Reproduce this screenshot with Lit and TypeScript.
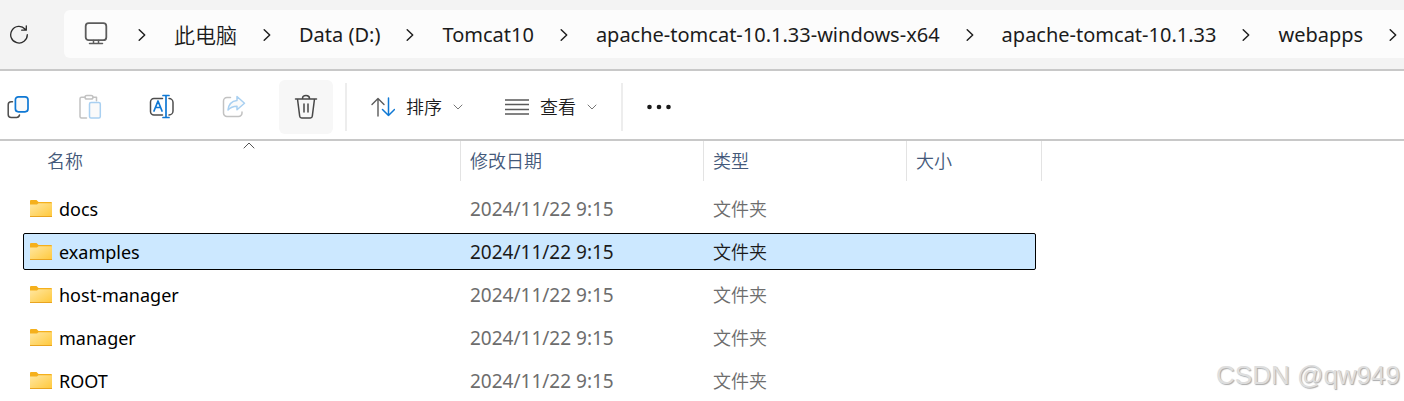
import { LitElement, html, css, svg } from "lit";
import { customElement, state } from "lit/decorators.js";

interface Entry {
  name: string;
  modified: string;
  type: string;
}

const crumbs = [
  "此电脑",
  "Data (D:)",
  "Tomcat10",
  "apache-tomcat-10.1.33-windows-x64",
  "apache-tomcat-10.1.33",
  "webapps",
];

const entries: Entry[] = ["docs", "examples", "host-manager", "manager", "ROOT"].map((name) => ({
  name,
  modified: "2024/11/22 9:15",
  type: "文件夹",
}));

const icon = (w: number, h: number, body: unknown) => html`
  <svg width=${w} height=${h} viewBox="0 0 ${w} ${h}" fill="none" stroke-width="1.5"
    stroke-linecap="round" stroke-linejoin="round" aria-hidden="true">${body}</svg>`;

const refreshIcon = icon(20, 20, svg`
  <path d="M16.2 5.2A8.3 8.3 0 1 0 18.3 10.6M17.3 1.8v4.4h-4.6" stroke="#2b2b2b" stroke-width="1.3"/>`);

const monitorIcon = icon(24, 24, svg`
  <rect x="1.7" y="1.2" width="20.6" height="17" rx="3" stroke="#5c5c5c" stroke-width="1.8"/>
  <path d="M9.5 18.500v3M14.5 18.500v3M5.5 21.500h13" stroke="#5c5c5c"/>`);

const crumbArrow = icon(8, 14, svg`
  <path d="M1.2 1.8L6.7 7L1.2 12.2" stroke="#1f1f1f"/>`);

const copyIcon = icon(24, 24, svg`
  <path d="M6.5 6.8H5.2a3 3 0 0 0-3 3V19.400a3 3 0 0 0 3 3H10.500a3 3 0 0 0 3-2.400" stroke="#4d4d4d"/>
  <rect x="9.400" y="1.800" width="12.600" height="15" rx="3" fill="#fafafa" stroke="#0f78d4" stroke-width="1.700"/>`);

const pasteIcon = icon(24, 26, svg`
  <path d="M7 3.300H3.500a1.500 1.500 0 0 0-1.500 1.500V22.500a1.500 1.500 0 0 0 1.500 1.500H8.500M15 3.300h3.500v3.500" stroke="#c2c2c2"/>
  <rect x="7" y="1.500" width="8" height="3.600" rx="1.800" stroke="#c2c2c2"/>
  <rect x="11.500" y="8.500" width="10.800" height="15.500" rx="1.500" fill="#fafafa" stroke="#a9d0f1"/>`);

const renameIcon = icon(26, 26, svg`
  <path d="M13.500 4.500H5a3.500 3.500 0 0 0-3.500 3.500V17.500a3.500 3.500 0 0 0 3.500 3.500H13.500M20 4.500a4 4 0 0 1 4 4V17a4 4 0 0 1-4 4" stroke="#4d4d4d"/>
  <path d="M5 17l4-10 4 10M6.500 13.500h5M17 1.500v22M14 1.500h6M14 23.500h6" stroke="#0f78d4" stroke-width="1.700"/>`);

const shareIcon = icon(24, 24, svg`
  <path d="M8.500 2.500H5a3.500 3.500 0 0 0-3.500 3.500V18A3.500 3.500 0 0 0 5 21.500H16.500A3.500 3.500 0 0 0 20 18V17" stroke="#c2c2c2"/>
  <path d="M15 1.500l7.500 6.700-7.500 6.600V11.200c-4 0-6.800 1.300-9 3.800.5-5.500 3.500-9 9-9.600z" fill="#fafafa" stroke="#a9d0f1"/>`);

const trashIcon = icon(24, 26, svg`
  <path d="M1.500 5h21M8.500 4.500a3.500 3 0 0 1 7 0M3.500 5l2.200 17.200a2 2 0 0 0 2 1.800h8.600a2 2 0 0 0 2-1.800L20.500 5M10 10v8M14 10v8" stroke="#484848"/>`);

const sortIcon = icon(24, 20, svg`
  <path d="M7 19V1.500M1 7.500l6-6 6 6" stroke="#5a5a5a" stroke-width="1.400"/>
  <path d="M17.500 1v17.500M11.500 12.500l6 6 6-6" stroke="#0f78d4"/>`);

const viewIcon = icon(24, 18, svg`
  <path d="M0 2h24M0 6.500h24M0 11.500h24M0 16h24" stroke="#5a5a5a" stroke-width="1.400" stroke-linecap="butt"/>`);

const downArrow = icon(10, 6, svg`
  <path d="M1 1l4 4 4-4" stroke="#777" stroke-width="1"/>`);

const upArrow = icon(12, 7, svg`
  <path d="M1 6l5-5 5 5" stroke="#555" stroke-width="1"/>`);

const dotsIcon = icon(24, 6, svg`
  <g fill="#1a1a1a"><circle cx="2.500" cy="3" r="2.300"/><circle cx="12" cy="3" r="2.300"/><circle cx="21.500" cy="3" r="2.300"/></g>`);

const folderIcon = icon(22, 18, svg`
  <defs><linearGradient id="face" x1="0" y1="0" x2="1" y2="1">
    <stop offset="0" stop-color="#ffe7a2"/><stop offset="1" stop-color="#ffc83a"/>
  </linearGradient></defs>
  <path d="M0 1Q0 0 1 0H6.500L8.500 2H21Q22 2 22 3V8H0z" fill="#f5b01c"/>
  <path d="M0 4.500H7L8.500 3.200H22V16.500Q22 17 21 17H1Q0 17 0 16.500z" fill="url(#face)"/>
  <path d="M0 16.500H22" stroke="#e9a420" stroke-width="1" stroke-linecap="butt"/>`);

@customElement("app-root")
export class AppRoot extends LitElement {
  static styles = css`
    :host {
      display: block;
      position: relative;
      overflow: hidden;
      background: #fff;
      color: #1b1b1b;
      font-family: "Noto Sans", "Noto Sans CJK SC", sans-serif;
      font-size: 18px;
      line-height: 24px;
    }
    svg { display: block; flex: none; }
    button {
      display: flex;
      align-items: center;
      justify-content: center;
      padding: 0;
      border: 0;
      background: none;
      color: inherit;
      font: inherit;
      white-space: nowrap;
    }
    .location {
      display: flex;
      align-items: center;
      gap: 35px;
      padding: 10px 0 11px 9px;
      background: #f3f3f3;
      border-bottom: 2px solid #c8c8c8;
    }
    .refresh { flex: none; }
    .address {
      display: flex;
      align-items: center;
      flex: 1;
      gap: 4px;
      min-width: 0;
      height: 48px;
      padding-left: 20px;
      overflow: hidden;
      border-radius: 6px 0 0 6px;
      background: #fcfcfc;
    }
    .trail {
      display: flex;
      align-items: center;
      margin: 0;
      padding: 2px 0 0;
      list-style: none;
    }
    .crumb { display: flex; align-items: center; }
    .crumb svg { margin: 0 28px 0 26px; }
    .crumb a {
      color: inherit;
      font-size: 20px;
      text-decoration: none;
      white-space: nowrap;
    }
    .crumb .cjk { font-size: 21px; }
    .cjk { font-weight: 350; }
    .toolbar {
      display: flex;
      align-items: center;
      margin-left: -9px;
      padding: 9px 0 5px;
      border-bottom: 2px solid #c8c8c8;
    }
    .actions { display: flex; gap: 18px; }
    .tool {
      width: 54px;
      height: 54px;
      border-radius: 6px;
    }
    .hovered { background: #f7f7f7; }
    .divider {
      width: 2px;
      height: 48px;
      background: #ededed;
    }
    .actions + .divider { margin-left: 12px; }
    .menus { display: flex; gap: 42px; padding: 0 24px; }
    .menu { gap: 11px; }
    .more { margin-left: 24px; height: 54px; }
    .files { display: block; }
    .files thead, .files tbody { display: block; }
    .head {
      display: grid;
      grid-template-columns: 423px 243px 203px 135px;
      margin-left: 38px;
    }
    .head th {
      position: relative;
      padding: 8px 9px;
      border-right: 1px solid #e3e3e3;
      color: #44597a;
      font-weight: 350;
      text-align: left;
    }
    .order {
      position: absolute;
      top: 1px;
      left: 50%;
      margin-left: -6px;
    }
    .files tbody {
      display: grid;
      gap: 6px;
      padding: 9px 0 1px;
    }
    .row {
      display: grid;
      grid-template-columns: 437px 243px 203px 128px;
      align-items: center;
      justify-self: start;
      height: 35px;
      margin-left: 23px;
      border: 1px solid transparent;
      border-radius: 2px;
      color: #6d6d6d;
    }
    .row td { padding: 0 9px; }
    .row .name {
      display: flex;
      align-items: center;
      gap: 7px;
      padding: 0 6px;
      color: #000;
    }
    .row .date { font-size: 19px; }
    .selected {
      border-color: #000;
      background: #cce8ff;
      color: #1b1b1b;
    }
    .watermark {
      position: absolute;
      right: 4px;
      bottom: 9px;
      color: #dedede;
      font-family: "Liberation Sans", Arial, sans-serif;
      font-size: 26px;
      line-height: 32px;
      text-shadow: 1px 1px 1px #aaa;
    }
  `;

  @state() private selected = "examples";

  render() {
    return html`
      <header class="location">
        <button class="refresh" aria-label="刷新">${refreshIcon}</button>
        <nav class="address" aria-label="路径">
          ${monitorIcon}
          <ol class="trail">
            <li class="crumb">${crumbArrow}</li>
            ${crumbs.map((c) => html`
              <li class="crumb"><a class=${c === "此电脑" ? "cjk" : ""} href="#">${c}</a>${crumbArrow}</li>`)}
          </ol>
        </nav>
      </header>
      <div class="toolbar" role="toolbar">
        <div class="actions">
          <button class="tool" aria-label="复制">${copyIcon}</button>
          <button class="tool" aria-label="粘贴" disabled>${pasteIcon}</button>
          <button class="tool" aria-label="重命名">${renameIcon}</button>
          <button class="tool" aria-label="共享" disabled>${shareIcon}</button>
          <button class="tool hovered" aria-label="删除">${trashIcon}</button>
        </div>
        <span class="divider"></span>
        <div class="menus">
          <button class="menu">${sortIcon}<span class="cjk">排序</span>${downArrow}</button>
          <button class="menu">${viewIcon}<span class="cjk">查看</span>${downArrow}</button>
        </div>
        <span class="divider"></span>
        <button class="more" aria-label="更多">${dotsIcon}</button>
      </div>
      <table class="files">
        <thead>
          <tr class="head">
            <th aria-sort="ascending">名称<span class="order">${upArrow}</span></th>
            <th>修改日期</th>
            <th>类型</th>
            <th>大小</th>
          </tr>
        </thead>
        <tbody>
          ${entries.map((e) => html`
            <tr class="row ${e.name === this.selected ? "selected" : ""}"
              @click=${() => (this.selected = e.name)}>
              <td class="name">${folderIcon}<span>${e.name}</span></td>
              <td class="date">${e.modified}</td>
              <td class="cjk">${e.type}</td>
              <td></td>
            </tr>`)}
        </tbody>
      </table>
      <div class="watermark">CSDN @qw949</div>
    `;
  }
}
